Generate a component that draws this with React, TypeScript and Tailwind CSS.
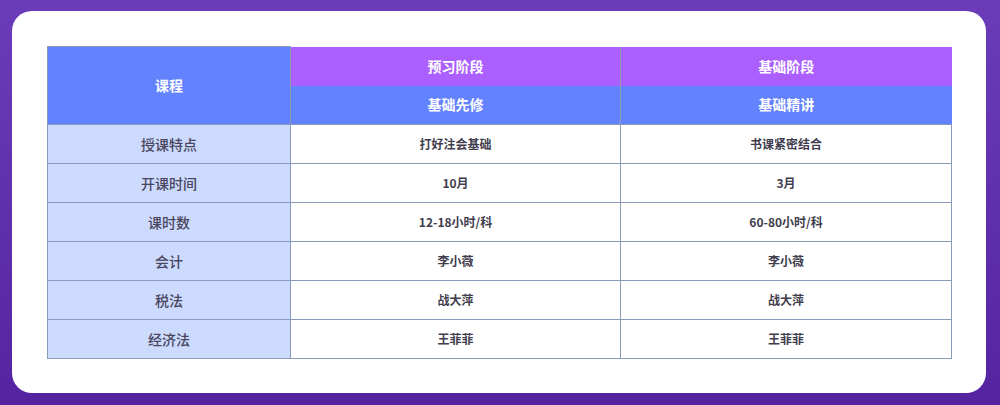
const rows: [string, string, string][] = [
  ["授课特点", "打好注会基础", "书课紧密结合"],
  ["开课时间", "10月", "3月"],
  ["课时数", "12-18小时/科", "60-80小时/科"],
  ["会计", "李小薇", "李小薇"],
  ["税法", "战大萍", "战大萍"],
  ["经济法", "王菲菲", "王菲菲"],
];

export default function App() {
  return (
    <div
      className="w-[1000px] h-[405px] overflow-hidden bg-gradient-to-b from-[#6b3cb9] to-[#5623a0] pt-[11px] pl-[12px]"
      style={{ fontFamily: '"Noto Sans CJK SC", "Noto Sans", sans-serif' }}
    >
      <div className="w-[974px] h-[382px] rounded-[20px] bg-white p-[35px]">
        <table className="w-[904px] table-fixed border-collapse text-center">
          <colgroup>
            <col className="w-[243px]" />
            <col className="w-[330px]" />
            <col className="w-[331px]" />
          </colgroup>
          <thead>
            <tr className="h-[39px]">
              <th
                rowSpan={2}
                className="bg-[#6382fe] text-white text-[14px] font-bold border border-[#8a9bb9] border-r-[#8a9bb9]"
              >
                课程
              </th>
              <th className="bg-[#ab5ffe] text-white text-[14px] font-bold border-r border-[#8a9bb9]">预习阶段</th>
              <th className="bg-[#ab5ffe] text-white text-[14px] font-bold">基础阶段</th>
            </tr>
            <tr className="h-[39px]">
              <th className="bg-[#6382fe] text-white text-[14px] font-bold border-r border-[#8a9bb9]">基础先修</th>
              <th className="bg-[#6382fe] text-white text-[14px] font-bold">基础精讲</th>
            </tr>
          </thead>
          <tbody>
            {rows.map(([label, a, b]) => (
              <tr key={label} className="h-[39px]">
                <td className="bg-[#ccdafe] border border-[#8a9bb9] text-[14px] font-medium text-[#4a4660]">{label}</td>
                <td className="border border-[#8a9bb9] text-[12px] font-bold text-[#3f3d4d]">{a}</td>
                <td className="border border-[#8a9bb9] text-[12px] font-bold text-[#3f3d4d]">{b}</td>
              </tr>
            ))}
          </tbody>
        </table>
      </div>
    </div>
  );
}
